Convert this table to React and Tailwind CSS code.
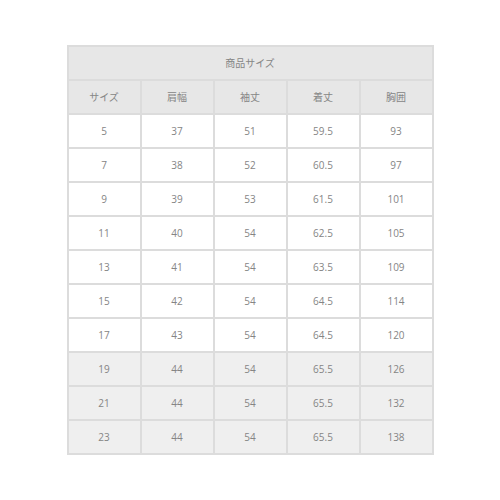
const HEADERS = ['サイズ', '肩幅', '袖丈', '着丈', '胸囲'];

const ROWS = [
  ['5', '37', '51', '59.5', '93'],
  ['7', '38', '52', '60.5', '97'],
  ['9', '39', '53', '61.5', '101'],
  ['11', '40', '54', '62.5', '105'],
  ['13', '41', '54', '63.5', '109'],
  ['15', '42', '54', '64.5', '114'],
  ['17', '43', '54', '64.5', '120'],
  ['19', '44', '54', '65.5', '126'],
  ['21', '44', '54', '65.5', '132'],
  ['23', '44', '54', '65.5', '138'],
];

export default function App() {
  return (
    <div
      className="w-[500px] h-[500px] bg-white pt-[45px] text-[#858585] text-[10px]"
      style={{ fontFamily: '"Open Sans", "Noto Sans CJK JP", sans-serif' }}
    >
      <table className="mx-auto w-[367px] border-collapse table-fixed border-2 border-[#dcdcdc]">
        <thead>
          <tr className="bg-[#e7e7e7] h-[34px]">
            <th colSpan={5} className="border-2 border-[#dcdcdc] font-normal text-center">
              商品サイズ
            </th>
          </tr>
          <tr className="bg-[#e7e7e7] h-[34px]">
            {HEADERS.map(h => (
              <th key={h} className="border-2 border-[#dcdcdc] font-normal text-center">
                {h}
              </th>
            ))}
          </tr>
        </thead>
        <tbody>
          {ROWS.map((row, i) => (
            <tr key={row[0]} className={`h-[34px] ${i >= 7 ? 'bg-[#efefef]' : 'bg-white'}`}>
              {row.map((cell, j) => (
                <td key={j} className="border-2 border-[#dcdcdc] text-center">
                  {cell}
                </td>
              ))}
            </tr>
          ))}
        </tbody>
      </table>
    </div>
  );
}
